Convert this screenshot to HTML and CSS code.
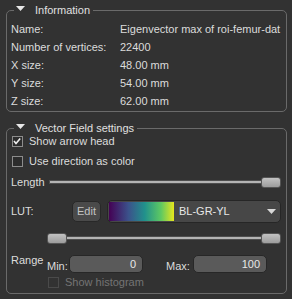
FILE: index.html
```html
<!DOCTYPE html>
<html lang="en">

<head>
  <meta charset="UTF-8">
  <title>Vector Field</title>
  <link rel="stylesheet" href="styles.css">
</head>

<body>
  <fieldset class="group info-group">
    <legend class="group-title">
      <svg class="caret" width="9" height="5" viewBox="0 0 9 5"><polygon points="0,0 9,0 4.5,5" fill="#e8e8e8" /></svg>
      Information
    </legend>
    <div class="info-row"><span class="info-label">Name:</span><span class="info-value">Eigenvector max of roi-femur-dat</span></div>
    <div class="info-row"><span class="info-label">Number of vertices:</span><span class="info-value">22400</span></div>
    <div class="info-row"><span class="info-label">X size:</span><span class="info-value">48.00 mm</span></div>
    <div class="info-row"><span class="info-label">Y size:</span><span class="info-value">54.00 mm</span></div>
    <div class="info-row"><span class="info-label">Z size:</span><span class="info-value">62.00 mm</span></div>
  </fieldset>

  <fieldset class="group vf-group">
    <legend class="group-title">
      <svg class="caret" width="9" height="5" viewBox="0 0 9 5"><polygon points="0,0 9,0 4.5,5" fill="#e8e8e8" /></svg>
      Vector Field settings
    </legend>

    <div class="check-row first">
      <span class="checkbox">
        <svg width="10" height="10" viewBox="0 0 10 10"><polyline points="2,5 4,7.5 8.2,2.5" fill="none" stroke="#f0f0f0" stroke-width="1.6" /></svg>
      </span>
      Show arrow head
    </div>
    <div class="check-row">
      <span class="checkbox"></span>
      Use direction as color
    </div>

    <div class="length-row">
      <span class="row-label">Length</span>
      <div class="slider">
        <div class="groove"></div>
        <div class="handle"></div>
      </div>
    </div>

    <div class="lut-row">
      <span class="row-label lut-label">LUT:</span>
      <button class="edit-btn">Edit</button>
      <div class="lut-combo">
        <span class="lut-swatch"></span>
        <span class="lut-name">BL-GR-YL</span>
        <svg class="combo-arrow" width="9" height="5" viewBox="0 0 9 5"><polygon points="0,0 9,0 4.5,5" fill="#d8d8d8" /></svg>
      </div>
    </div>

    <div class="slider range-slider">
      <div class="handle"></div>
      <div class="groove"></div>
      <div class="handle"></div>
    </div>

    <div class="range-row">
      <span class="row-label range-label">Range</span>
      <span class="spin-label">Min:</span>
      <div class="spin-box min-box">0</div>
      <span class="spin-label max-label">Max:</span>
      <div class="spin-box">100</div>
    </div>

    <div class="check-row hist-row">
      <span class="checkbox disabled"></span>
      Show histogram
    </div>
  </fieldset>
</body>

</html>
```

FILE: styles.css
```css
/* Base styles */
body {
  margin: 0;
  padding: 4px 0 0 0;
  background-color: #323232;
  color: #dcdcdc;
  font-family: "Liberation Sans", Arial, sans-serif;
  font-size: 11px;
}

/* Group boxes */
.group {
  margin: 0 5px 0 6px;
  padding: 0 5px 0 4px;
  border: 1px solid #6a6a6a;
  border-radius: 5px;
  min-width: 0;
}

.group-title {
  margin-left: 3px;
  padding: 0 3px 0 2px;
  line-height: 12px;
  color: #e0e0e0;
  display: flex;
  align-items: center;
}

.caret {
  margin-right: 10px;
  margin-top: -3px;
}

.info-group {
  padding-top: 4px;
  padding-bottom: 1px;
}

.vf-group {
  margin-top: 10px;
  padding-bottom: 4px;
}

/* Information rows */
.info-row {
  display: flex;
  height: 18px;
  align-items: center;
}

.info-label {
  width: 109px;
  flex-shrink: 0;
}

.info-value {
  white-space: nowrap;
}

/* Checkboxes */
.check-row {
  display: flex;
  align-items: center;
  height: 14px;
  margin-top: 6px;
}

.check-row.first {
  margin-top: 0;
}

.checkbox {
  width: 9px;
  height: 9px;
  border: 1px solid #8c8c8c;
  background-color: #2c2c2c;
  margin: 0 6px 0 1px;
  display: flex;
}

.checkbox svg {
  margin: -1px 0 0 -1px;
}

.checkbox.disabled {
  border-color: #4a4a4a;
  background-color: #323232;
}

.hist-row {
  margin-top: 2px;
  margin-left: 36px;
  color: #747474;
}

/* Sliders */
.length-row {
  display: flex;
  align-items: center;
  height: 14px;
  margin-top: 7px;
}

.row-label {
  flex-shrink: 0;
}

.length-row .row-label {
  width: 38px;
}

.slider {
  display: flex;
  align-items: center;
  flex: 1;
}

.groove {
  flex: 1;
  height: 2px;
  background-color: #b4b4b4;
  border: 1px solid #4e4e4e;
  border-left: none;
  border-right: none;
}

.length-row .groove {
  border-left: 1px solid #4e4e4e;
}

.handle {
  width: 18px;
  height: 9px;
  border: 1px solid #555;
  border-radius: 3px;
  background: linear-gradient(#c2c2c2, #9c9c9c);
}

.range-slider {
  margin: 11px 0 0 36px;
  height: 10px;
}

/* LUT */
.lut-row {
  display: flex;
  align-items: center;
  height: 22px;
  margin-top: 11px;
}

.lut-label {
  width: 61px;
}

.edit-btn {
  width: 29px;
  height: 21px;
  padding: 0;
  border: 1px solid #282828;
  border-radius: 5px;
  background-color: #4a4a4a;
  color: #c4c4c4;
  font-family: inherit;
  font-size: 11px;
}

.lut-combo {
  flex: 1;
  height: 21px;
  margin-left: 6px;
  border: 1px solid #262626;
  border-radius: 5px;
  background-color: #474747;
  display: flex;
  align-items: center;
  overflow: hidden;
}

.lut-swatch {
  width: 65px;
  height: 19px;
  margin-left: 1px;
  background: linear-gradient(to right, #440154, #3b528b 30%, #21918c 55%, #5ec962 80%, #e6e61e);
}

.lut-name {
  flex: 1;
  margin-left: 5px;
  color: #e8e8e8;
}

.combo-arrow {
  margin-right: 4px;
}

/* Range */
.range-row {
  display: flex;
  height: 18px;
  margin-top: 12px;
}

.range-label {
  width: 36px;
  margin-top: -1px;
}

.spin-label {
  align-self: flex-end;
  margin-bottom: 1px;
  width: 22px;
}

.max-label {
  margin-left: 23px;
  width: 27px;
}

.spin-box {
  width: 66px;
  height: 16px;
  line-height: 16px;
  padding-right: 6px;
  text-align: right;
  border: 1px solid #272727;
  border-radius: 5px;
  background-color: #5a5a5a;
  color: #e8e8e8;
}
```
